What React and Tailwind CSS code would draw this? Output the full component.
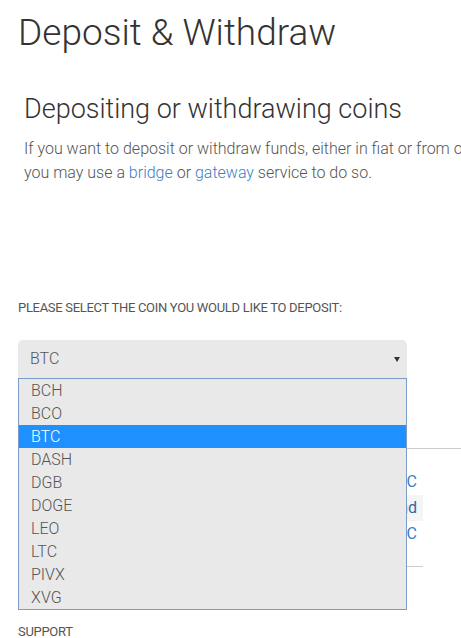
import { useState } from 'react';

const coins = ['BCH', 'BCO', 'BTC', 'DASH', 'DGB', 'DOGE', 'LEO', 'LTC', 'PIVX', 'XVG'];

export default function App() {
  const [selected, setSelected] = useState('BTC');

  return (
    <div className="w-[461px] h-[638px] overflow-hidden bg-white font-['Roboto',sans-serif]">
      <div className="w-[760px] pl-[18px] pt-[9px]">
        {/* Page title */}
        <h1 className="text-[37px] leading-[48px] font-light text-[#333] whitespace-nowrap">
          Deposit &amp; Withdraw
        </h1>

        <div className="pl-[6px] mt-[34px]">
          <h2 className="text-[27px] leading-[36px] font-light text-[#333] whitespace-nowrap">
            Depositing or withdrawing coins
          </h2>
          <p className="mt-[10px] text-[16px] leading-[24px] font-light text-[#555] whitespace-nowrap">
            If you want to deposit or withdraw funds, either in fiat or from other blockchains,
            <br />
            you may use a <a className="text-[#3a7fc1]">bridge</a> or{' '}
            <a className="text-[#3a7fc1]">gateway</a> service to do so.
          </p>
        </div>

        {/* Coin select */}
        <div className="mt-[115px] text-[13px] leading-[16px] text-[#555] uppercase tracking-[-0.3px] whitespace-nowrap">
          Please select the coin you would like to deposit:
        </div>

        <div className="relative mt-[24px] w-[389px]">
          <div className="h-[38px] bg-[#e9e9e9] rounded-t-[5px] flex items-center justify-between pl-[12px] pr-[7px]">
            <span className="text-[16px] font-light text-[#555]">{selected}</span>
            <span className="w-0 h-0 border-l-[3px] border-r-[3px] border-t-[5px] border-l-transparent border-r-transparent border-t-[#333]" />
          </div>

          {/* Open option list */}
          <ul className="absolute top-full left-0 z-10 w-[389px] bg-[#e9e9e9] border border-[#7b9bc9]">
            {coins.map((c) => (
              <li
                key={c}
                onClick={() => setSelected(c)}
                className={`h-[23px] pl-[12px] flex items-center text-[16px] font-light ${
                  c === selected ? 'bg-[#1e90ff] text-white' : 'text-[#555]'
                }`}
              >
                {c}
              </li>
            ))}
          </ul>
        </div>

        {/* Content behind the list */}
        <div className="mt-[70px] border-t border-[#ccc]">
          <div className="w-[405px] border-b border-[#ccc] pt-[20px] pb-[19px]">
            <div className="h-[26px] flex items-center justify-end pr-[6px] text-[16px] text-[#3a7fc1]">Deposit BTC</div>
            <div className="h-[26px] flex items-center justify-end bg-[#f5f5f5] pr-[6px] text-[16px] text-[#2c6aa6]">Send</div>
            <div className="h-[26px] flex items-center justify-end pr-[6px] text-[16px] text-[#3a7fc1]">Withdraw BTC</div>
          </div>
        </div>

        <div className="mt-[57px] text-[13px] leading-[16px] text-[#555] uppercase tracking-[-0.3px]">
          Support
        </div>
      </div>
    </div>
  );
}
